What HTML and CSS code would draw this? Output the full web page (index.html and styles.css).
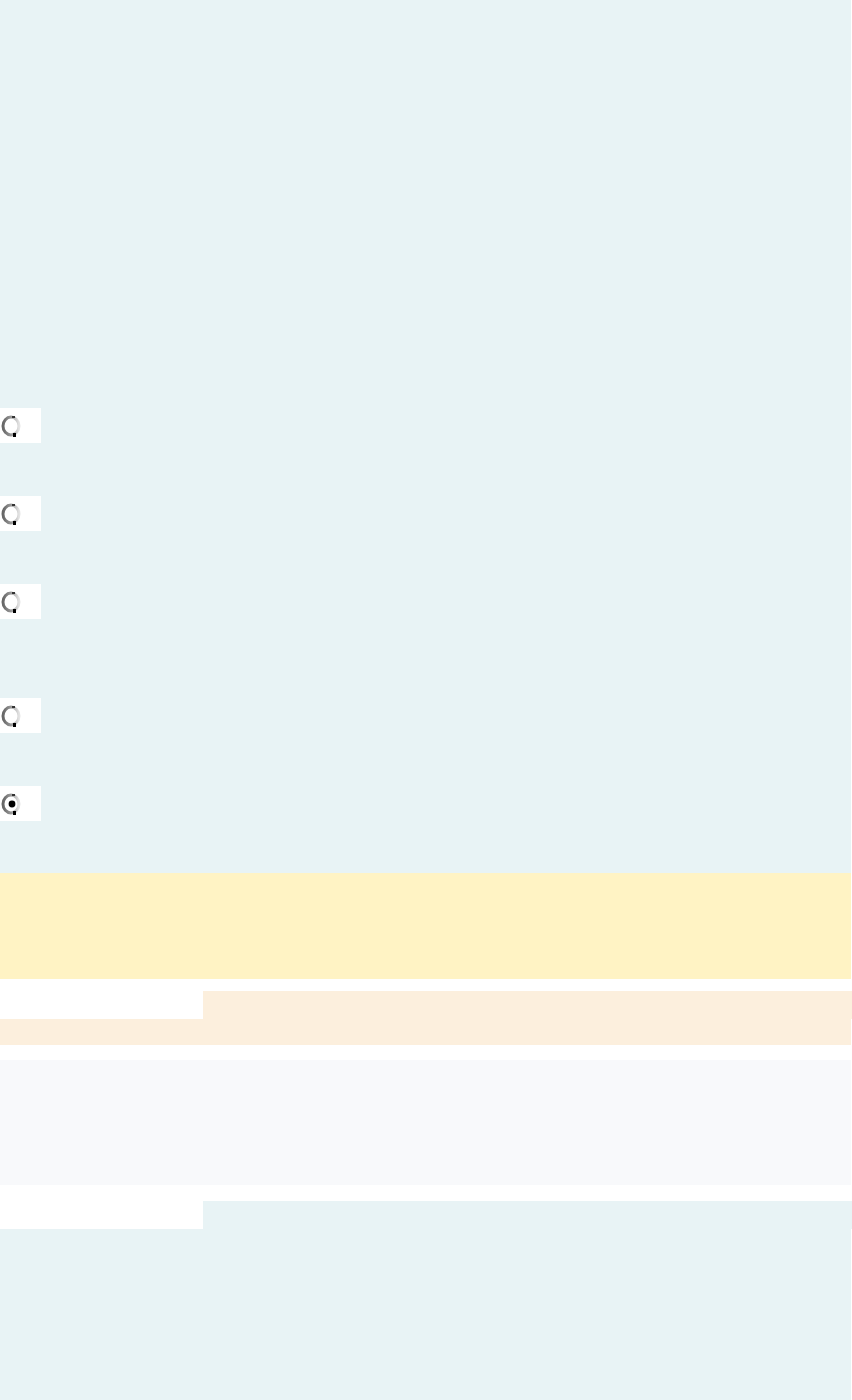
FILE: index.html
```html
<!DOCTYPE html>
<html lang="en">
<head>
<meta charset="utf-8">
<title>Quiz</title>
<link rel="stylesheet" href="styles.css">
</head>
<body>
<main class="page">
  <section class="question">
    <div class="options">
      <label class="option"><svg class="radio" viewBox="0 0 22 24" width="22" height="24"><defs><linearGradient id="g" x1="0" x2="1" y1="0" y2="0"><stop offset="0" stop-color="#666"/><stop offset="0.5" stop-color="#999"/><stop offset="1" stop-color="#e4e4e4"/></linearGradient></defs><ellipse cx="10" cy="12" rx="8" ry="9" fill="#fff" stroke="url(#g)" stroke-width="3"/><rect x="12" y="19" width="3" height="4" fill="#000"/><rect x="11" y="2" width="3" height="2" fill="#333"/></svg></label>
      <label class="option"><svg class="radio" viewBox="0 0 22 24" width="22" height="24"><ellipse cx="10" cy="12" rx="8" ry="9" fill="#fff" stroke="url(#g)" stroke-width="3"/><rect x="12" y="19" width="3" height="4" fill="#000"/><rect x="11" y="2" width="3" height="2" fill="#333"/></svg></label>
      <label class="option option-last-group"><svg class="radio" viewBox="0 0 22 24" width="22" height="24"><ellipse cx="10" cy="12" rx="8" ry="9" fill="#fff" stroke="url(#g)" stroke-width="3"/><rect x="12" y="19" width="3" height="4" fill="#000"/><rect x="11" y="2" width="3" height="2" fill="#333"/></svg></label>
      <label class="option"><svg class="radio" viewBox="0 0 22 24" width="22" height="24"><ellipse cx="10" cy="12" rx="8" ry="9" fill="#fff" stroke="url(#g)" stroke-width="3"/><rect x="12" y="19" width="3" height="4" fill="#000"/><rect x="11" y="2" width="3" height="2" fill="#333"/></svg></label>
      <label class="option"><svg class="radio" viewBox="0 0 22 24" width="22" height="24"><ellipse cx="10" cy="12" rx="8" ry="9" fill="#fff" stroke="url(#g)" stroke-width="3"/><circle cx="11" cy="12" r="3.4" fill="#000"/><rect x="12" y="19" width="3" height="4" fill="#000"/><rect x="11" y="2" width="3" height="2" fill="#333"/></svg></label>
    </div>
  </section>
  <section class="notice"></section>
  <section class="tabbed tabbed-warm">
    <div class="tab-row"><div class="tab-spacer"></div><div class="tab"></div></div>
    <div class="tab-body"></div>
  </section>
  <section class="panel"></section>
  <section class="tabbed tabbed-cool">
    <div class="tab-row"><div class="tab-spacer"></div><div class="tab"></div></div>
    <div class="tab-body tab-body-tall"></div>
  </section>
</main>
</body>
</html>
```

FILE: styles.css
```css
html, body {
  margin: 0;
  padding: 0;
  background: #ffffff;
  font-family: "Liberation Sans", Arial, sans-serif;
}

.page {
  display: flex;
  flex-direction: column;
  width: 852px;
}

.question {
  width: 851px;
  height: 873px;
  background: #e8f3f5;
  padding-top: 408px;
  box-sizing: border-box;
}

.options {
  display: flex;
  flex-direction: column;
  gap: 53px;
}

.option {
  display: flex;
  align-items: center;
  width: 41px;
  height: 35px;
  background: #ffffff;
  padding-left: 1px;
  box-sizing: border-box;
}

.option-last-group {
  margin-bottom: 26px;
}

.radio {
  display: block;
}

.notice {
  width: 851px;
  height: 106px;
  background: #fff3c4;
}

.tabbed {
  display: flex;
  flex-direction: column;
}

.tabbed-warm {
  margin-top: 12px;
}

.tabbed-cool {
  margin-top: 16px;
}

.tab-row {
  display: flex;
  height: 28px;
}

.tab-spacer {
  width: 203px;
}

.tab {
  flex: 1;
}

.tab-body {
  width: 851px;
  height: 26px;
}

.tab-body-tall {
  height: 171px;
}

.tabbed-warm .tab,
.tabbed-warm .tab-body {
  background: #fcefdd;
}

.tabbed-cool .tab,
.tabbed-cool .tab-body {
  background: #e8f3f5;
}

.panel {
  margin-top: 15px;
  width: 851px;
  height: 125px;
  background: #f8f9fb;
}
```
